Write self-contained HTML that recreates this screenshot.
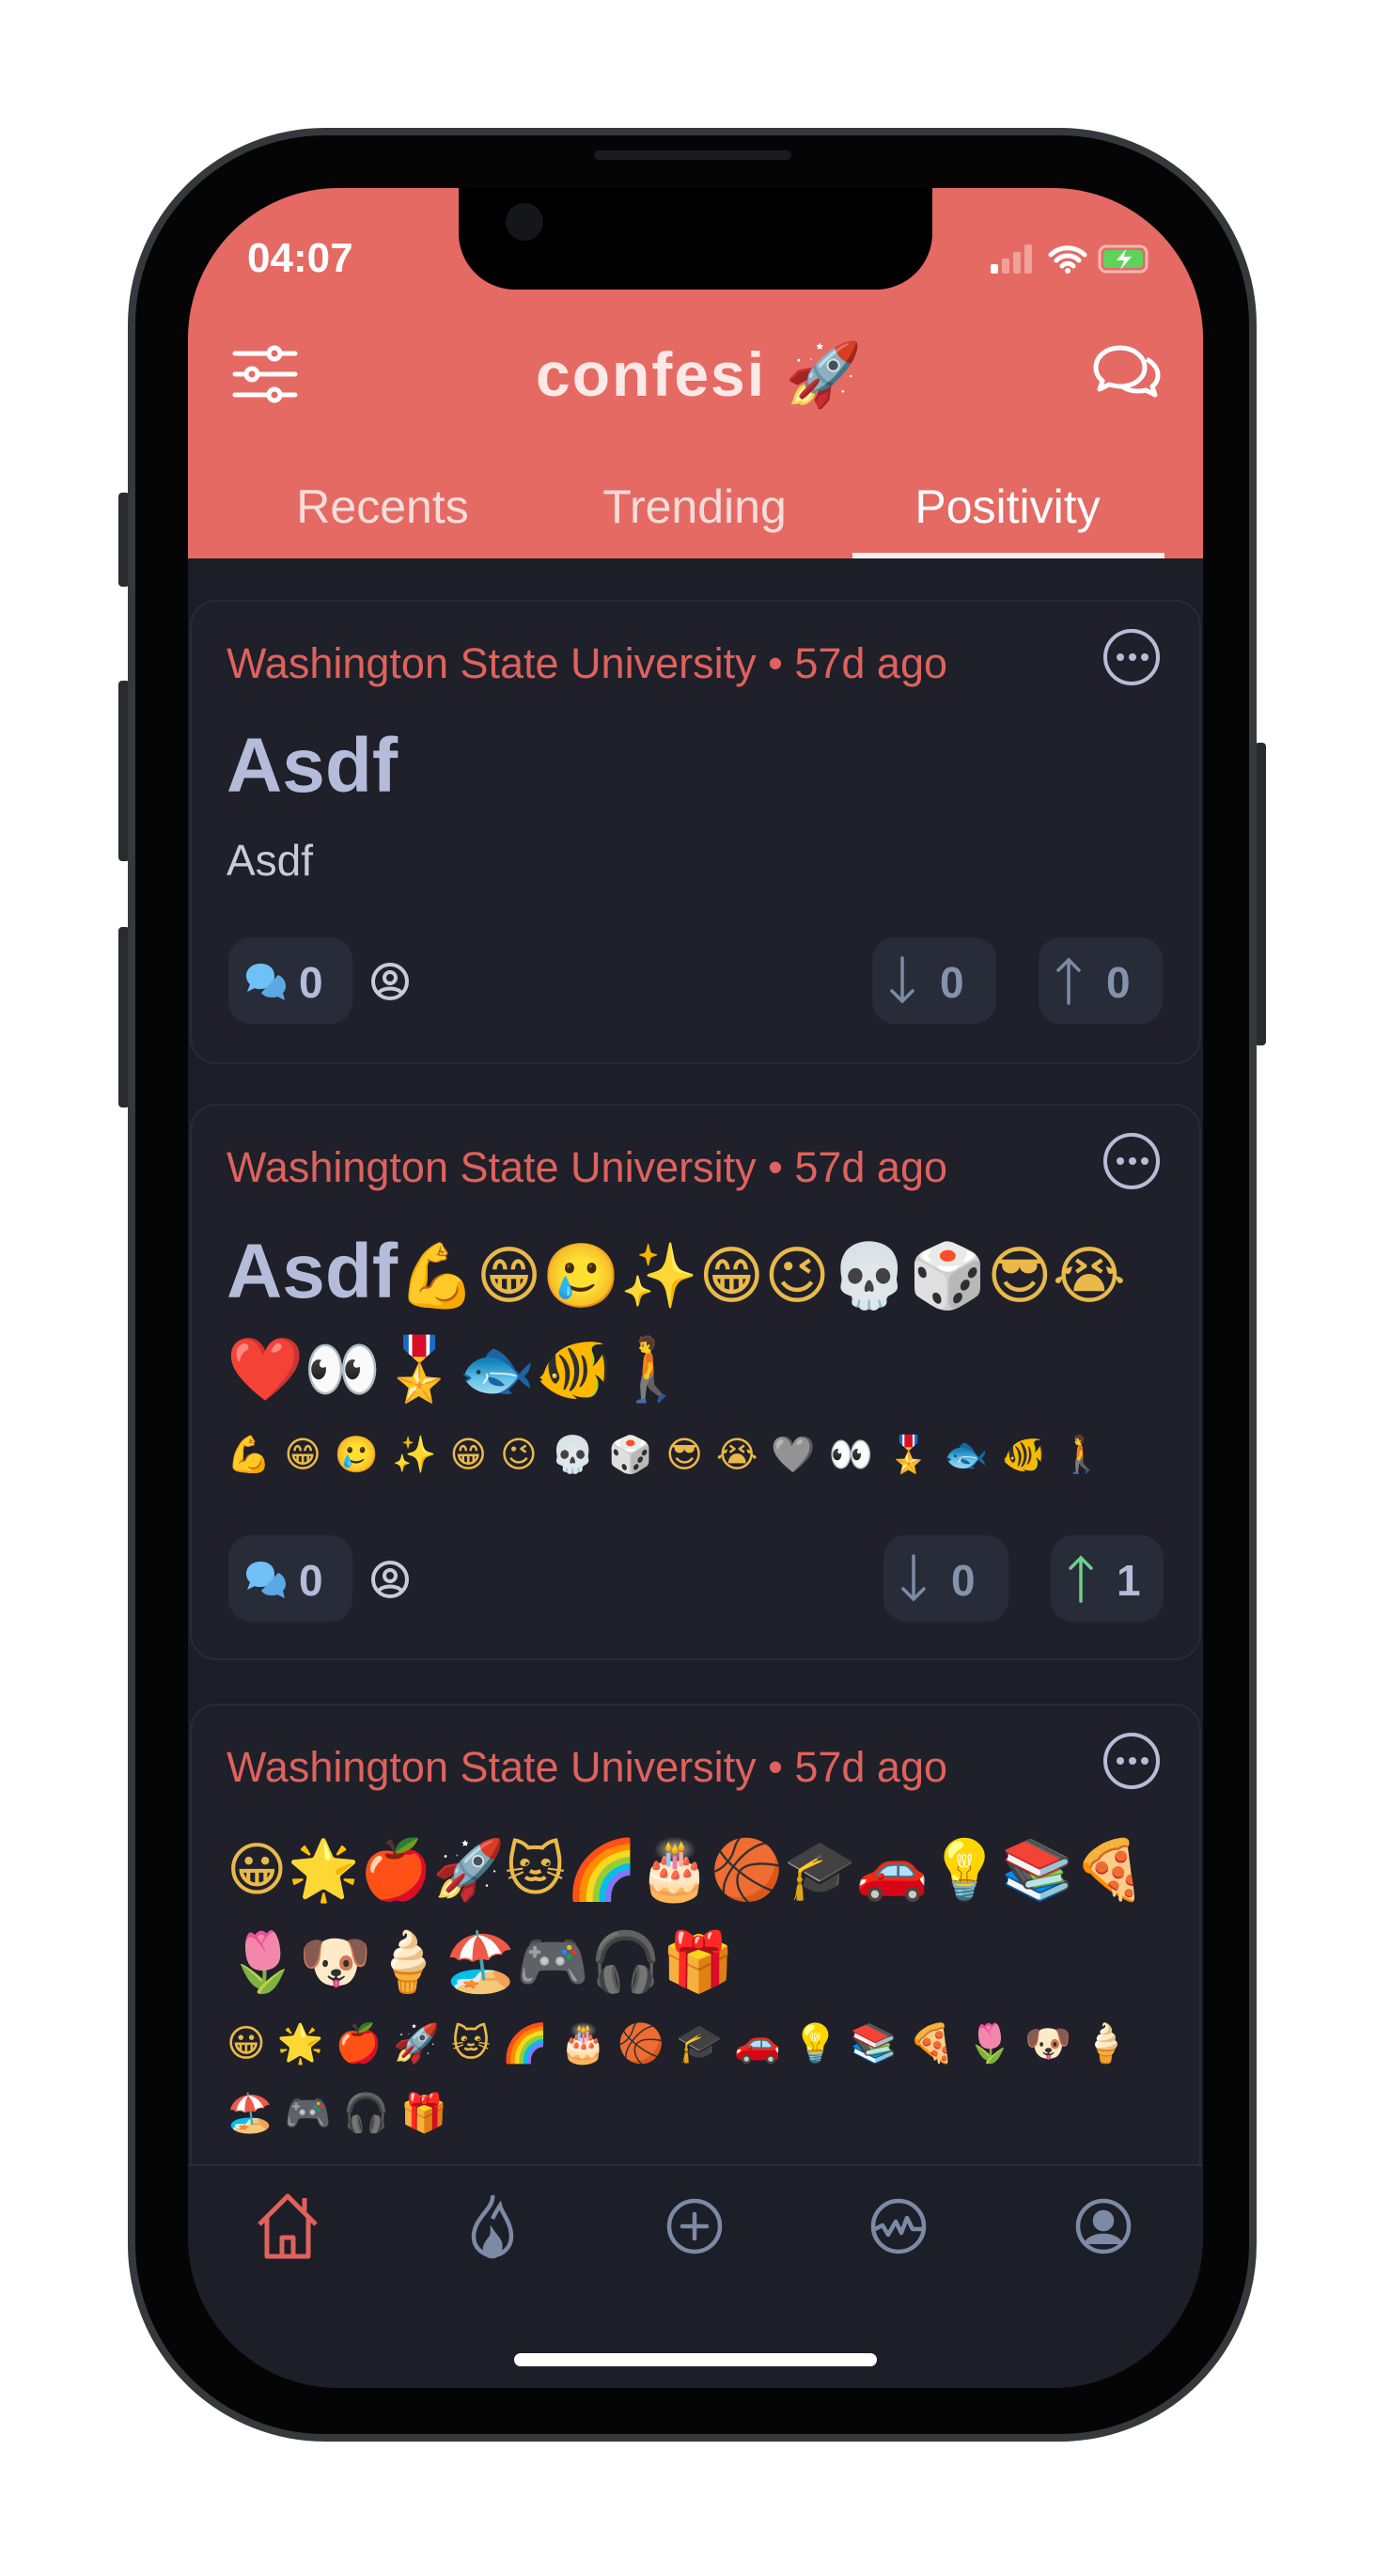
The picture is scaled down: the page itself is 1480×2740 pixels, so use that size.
<!DOCTYPE html>
<html><head><meta charset="utf-8"><style>
*{margin:0;padding:0;box-sizing:border-box}
body{width:1480px;height:2740px;background:#fff;position:relative;overflow:hidden;font-family:"Liberation Sans",sans-serif}
.a{position:absolute}
.phone{left:136px;top:136px;width:1201px;height:2461px;border-radius:210px;background:#050506;border:8px solid #36383c}
.btn{background:#2a2b2f;border-radius:4px}
.screen{left:200px;top:200px;width:1080px;height:2340px;border-radius:160px;background:#1c1e27;overflow:hidden}
.hdr{left:0;top:0;width:1080px;height:394px;background:#e56a63}
.notch{left:288px;top:0;width:504px;height:108px;background:#000;border-radius:0 0 60px 60px}
.card{left:2px;width:1076px;background:#1f2029;border:2px solid #292b35;border-radius:28px}
.meta{left:41px;font-size:45px;color:#e0625c;white-space:nowrap}
.dots{width:60px;height:60px;border:4px solid #b7bdd6;border-radius:50%}
.pill{height:92px;background:#282c38;border-radius:24px}
.num{font-weight:bold;font-size:46px;color:#b4bcd9}
.emo{font-family:"DejaVu Sans","Noto Sans CJK JP",sans-serif;color:#e9b949;white-space:nowrap}
</style></head><body>
<div class="a btn" style="left:126px;top:524px;width:12px;height:100px"></div>
<div class="a btn" style="left:126px;top:724px;width:12px;height:192px"></div>
<div class="a btn" style="left:126px;top:986px;width:12px;height:192px"></div>
<div class="a btn" style="left:1335px;top:790px;width:12px;height:322px"></div>
<div class="a phone"></div>
<div class="a" style="left:632px;top:160px;width:210px;height:10px;border-radius:5px;background:#1a1b1e"></div>
<div class="a screen">
 <div class="a hdr"></div>
 <div class="a notch"></div>
 <div class="a" style="left:338px;top:16px;width:40px;height:40px;border-radius:50%;background:#15161a"></div>
 <div class="a" style="left:63px;top:50px;font-size:44px;font-weight:bold;color:#fff">04:07</div>
 <svg class="a" style="left:850px;top:55px" width="180" height="40" viewBox="0 0 180 40">
  <rect x="4" y="26" width="8" height="10" rx="2" fill="#fff"/><rect x="16" y="20" width="8" height="16" rx="2" fill="#f0a19c"/><rect x="28" y="13" width="8" height="23" rx="2" fill="#f0a19c"/><rect x="40" y="5" width="8" height="31" rx="2" fill="#f0a19c"/>
  <path d="M68 16a26 26 0 0 1 36 0M74 22a17 17 0 0 1 24 0M80 28a8 8 0 0 1 12 0" stroke="#fff" stroke-width="5" fill="none" stroke-linecap="round"/><circle cx="86" cy="33" r="3" fill="#fff"/>
  <rect x="120" y="7" width="50" height="27" rx="7" fill="none" stroke="#f5b8b3" stroke-width="3"/><rect x="124" y="11" width="42" height="19" rx="4" fill="#5fd25b"/><path d="M148 10l-10 12h8l-4 10 12-14h-8z" fill="#fff"/>
 </svg>
 <svg class="a" style="left:46px;top:166px" width="72" height="66" viewBox="0 0 72 66" stroke="#fff" stroke-width="5" fill="none" stroke-linecap="round">
  <path d="M4 10h64M4 32h64M4 54h64"/><circle cx="46" cy="10" r="6" fill="#e56a63"/><circle cx="22" cy="32" r="6" fill="#e56a63"/><circle cx="46" cy="54" r="6" fill="#e56a63"/>
 </svg>
 <div class="a" style="left:370px;top:160px;font-size:66px;font-weight:bold;color:#fbe9e7;letter-spacing:2px">confesi <span class="emo" style="color:#c8d3e8">🚀</span></div>
 <svg class="a" style="left:962px;top:164px" width="74" height="70" viewBox="0 0 74 70" stroke="#fff" stroke-width="5" fill="none" stroke-linejoin="round">
  <path d="M30 6C15 6 4 15 4 27c0 6 3 11 7 14l-3 9 10-5c4 1 8 2 12 2 15 0 26-9 26-20S45 6 30 6z"/>
  <path d="M58 18c7 4 12 10 12 17 0 5-2 9-6 12l3 9-10-5c-3 1-6 1-9 1-6 0-12-2-16-5"/>
 </svg>
 <div class="a" style="left:0;top:310px;width:1080px;font-size:50px;color:#f6dcd9">
  <span class="a" style="left:207px;width:0;display:flex;justify-content:center;white-space:nowrap">Recents</span>
  <span class="a" style="left:539px;width:0;display:flex;justify-content:center;white-space:nowrap">Trending</span>
  <span class="a" style="left:872px;width:0;display:flex;justify-content:center;white-space:nowrap;color:#fff">Positivity</span>
 </div>
 <div class="a" style="left:707px;top:388px;width:332px;height:6px;background:#fbeeee"></div>

 <!-- card 1 -->
 <div class="a card" style="top:438px;height:494px"></div>
 <div class="a meta" style="top:480px">Washington State University • 57d ago</div>
 <div class="a dots" style="left:974px;top:469px"></div>
 <div class="a" style="left:988px;top:495px;font-size:0"><svg width="34" height="8"><circle cx="4" cy="4" r="4" fill="#b7bdd6"/><circle cx="17" cy="4" r="4" fill="#b7bdd6"/><circle cx="30" cy="4" r="4" fill="#b7bdd6"/></svg></div>
 <div class="a" style="left:41px;top:568px;font-size:82px;font-weight:900;color:#b4bcd9">Asdf</div>
 <div class="a" style="left:41px;top:688px;font-size:46px;color:#c8ccd8">Asdf</div>

 <div class="a pill" style="left:43px;top:797px;width:132px"></div>
 <svg class="a" style="left:60px;top:823px" width="46" height="42" viewBox="0 0 46 42"><path d="M17 2C8 2 2 8 2 15c0 4 2 7 4 9l-3 8 8-4c2 1 4 1 6 1 9 0 15-6 15-14S26 2 17 2z" fill="#6ec0f6"/><path d="M36 14c5 2 8 7 8 12 0 3-1 5-3 7l2 8-8-4c-2 1-4 1-6 1-5 0-9-2-11-5" fill="#5aa9e4"/></svg>
 <div class="a num" style="left:118px;top:818px">0</div>
 <svg class="a" style="left:194px;top:823px" width="42" height="42" viewBox="0 0 42 42" fill="none" stroke="#c8ccd8" stroke-width="4"><circle cx="21" cy="21" r="18"/><circle cx="21" cy="17" r="6"/><path d="M9 33c4-6 20-6 24 0"/></svg>
 <div class="a pill" style="left:728px;top:797px;width:132px"></div>
 <svg class="a" style="left:745px;top:816px" width="30" height="54" viewBox="0 0 30 54" fill="none" stroke="#7d8aa6" stroke-width="3.5" stroke-linecap="round"><path d="M15 3v46M4 38l11 11 11-11"/></svg>
 <div class="a num" style="left:800px;top:818px;color:#8592ad">0</div>
 <div class="a pill" style="left:905px;top:797px;width:132px"></div>
 <svg class="a" style="left:922px;top:816px" width="30" height="54" viewBox="0 0 30 54" fill="none" stroke="#7d8aa6" stroke-width="3.5" stroke-linecap="round"><path d="M15 51V5M4 16L15 5l11 11"/></svg>
 <div class="a num" style="left:977px;top:818px;color:#8592ad">0</div>

 <!-- card 2 -->
 <div class="a card" style="top:974px;height:592px"></div>
 <div class="a meta" style="top:1016px">Washington State University • 57d ago</div>
 <div class="a dots" style="left:974px;top:1005px"></div>
 <div class="a" style="left:988px;top:1031px;font-size:0"><svg width="34" height="8"><circle cx="4" cy="4" r="4" fill="#b7bdd6"/><circle cx="17" cy="4" r="4" fill="#b7bdd6"/><circle cx="30" cy="4" r="4" fill="#b7bdd6"/></svg></div>
 <div class="a" style="left:41px;top:1106px;font-size:82px;font-weight:900;color:#b4bcd9;white-space:nowrap">Asdf<span class="emo" style="font-size:67px">💪😁🥲✨😁😉💀🎲😎😭</span></div>
 <div class="a emo" style="left:41px;top:1218px;font-size:66px">❤️👀🎖️🐟🐠🚶</div>
 <div class="a emo" style="left:41px;top:1325px;font-size:38px;letter-spacing:14px">💪😁🥲✨😁😉💀🎲😎😭🩶👀🎖️🐟🐠🚶</div>
 <div class="a pill" style="left:43px;top:1433px;width:132px"></div>
 <svg class="a" style="left:60px;top:1459px" width="46" height="42" viewBox="0 0 46 42"><path d="M17 2C8 2 2 8 2 15c0 4 2 7 4 9l-3 8 8-4c2 1 4 1 6 1 9 0 15-6 15-14S26 2 17 2z" fill="#6ec0f6"/><path d="M36 14c5 2 8 7 8 12 0 3-1 5-3 7l2 8-8-4c-2 1-4 1-6 1-5 0-9-2-11-5" fill="#5aa9e4"/></svg>
 <div class="a num" style="left:118px;top:1454px">0</div>
 <svg class="a" style="left:194px;top:1459px" width="42" height="42" viewBox="0 0 42 42" fill="none" stroke="#c8ccd8" stroke-width="4"><circle cx="21" cy="21" r="18"/><circle cx="21" cy="17" r="6"/><path d="M9 33c4-6 20-6 24 0"/></svg>
 <div class="a pill" style="left:740px;top:1433px;width:133px"></div>
 <svg class="a" style="left:757px;top:1452px" width="30" height="54" viewBox="0 0 30 54" fill="none" stroke="#7d8aa6" stroke-width="3.5" stroke-linecap="round"><path d="M15 3v46M4 38l11 11 11-11"/></svg>
 <div class="a num" style="left:812px;top:1454px;color:#8592ad">0</div>
 <div class="a pill" style="left:918px;top:1433px;width:120px"></div>
 <svg class="a" style="left:935px;top:1452px" width="30" height="54" viewBox="0 0 30 54" fill="none" stroke="#6fcf8f" stroke-width="3.5" stroke-linecap="round"><path d="M15 51V5M4 16L15 5l11 11"/></svg>
 <div class="a num" style="left:988px;top:1454px">1</div>

 <!-- card 3 -->
 <div class="a card" style="top:1612px;height:800px"></div>
 <div class="a meta" style="top:1654px">Washington State University • 57d ago</div>
 <div class="a dots" style="left:974px;top:1643px"></div>
 <div class="a" style="left:988px;top:1669px;font-size:0"><svg width="34" height="8"><circle cx="4" cy="4" r="4" fill="#b7bdd6"/><circle cx="17" cy="4" r="4" fill="#b7bdd6"/><circle cx="30" cy="4" r="4" fill="#b7bdd6"/></svg></div>
 <div class="a emo" style="left:41px;top:1752px;font-size:62px;letter-spacing:0px">😀🌟🍎🚀🐱🌈🎂🏀🎓🚗💡📚🍕</div>
 <div class="a emo" style="left:41px;top:1850px;font-size:62px;letter-spacing:0px">🌷🐶🍦🏖️🎮🎧🎁</div>
 <div class="a emo" style="left:41px;top:1950px;font-size:40px;letter-spacing:12px">😀🌟🍎🚀🐱🌈🎂🏀🎓🚗💡📚🍕🌷🐶🍦</div>
 <div class="a emo" style="left:41px;top:2024px;font-size:40px;letter-spacing:12px">🏖️🎮🎧🎁</div>

 <!-- tab bar -->
 <div class="a" style="left:0;top:2102px;width:1080px;height:238px;background:#1d1f28;border-top:2px solid #2a2d38"></div>
 <svg class="a" style="left:72px;top:2132px" width="68" height="72" viewBox="0 0 68 72" fill="none" stroke="#e0625c" stroke-width="5" stroke-linejoin="round"><path d="M4 34L34 4l30 30M12 26v42h44V26M28 68V48h12v20M52 20V6"/></svg>
 <svg class="a" style="left:300px;top:2132px" width="48" height="72" viewBox="0 0 48 72" fill="none" stroke="#7d8aa6" stroke-width="4.5"><path d="M24 3c2 14-20 24-20 44a20 20 0 0 0 40 0C44 32 34 22 32 14c-4 6-6 10-8 14"/><path d="M24 68c-8 0-10-8-6-14 2-4 6-6 6-12 4 6 10 10 8 18-1 5-4 8-8 8z" fill="#7d8aa6"/></svg>
 <svg class="a" style="left:508px;top:2137px" width="62" height="62" viewBox="0 0 62 62" fill="none" stroke="#7d8aa6" stroke-width="4.5" stroke-linecap="round"><circle cx="31" cy="31" r="27"/><path d="M31 18v26M18 31h26"/></svg>
 <svg class="a" style="left:725px;top:2137px" width="62" height="62" viewBox="0 0 62 62" fill="none" stroke="#7d8aa6" stroke-width="4.5" stroke-linejoin="round"><circle cx="31" cy="31" r="27"/><path d="M6 34l8-4 6 10 8-14 6 12 6-16 6 12h10"/></svg>
 <svg class="a" style="left:943px;top:2137px" width="62" height="62" viewBox="0 0 62 62" fill="none" stroke="#7d8aa6" stroke-width="4.5"><circle cx="31" cy="31" r="27"/><circle cx="31" cy="25" r="9" fill="#7d8aa6"/><path d="M12 50c6-12 32-12 38 0" fill="#7d8aa6"/></svg>
 <div class="a" style="left:347px;top:2303px;width:386px;height:14px;border-radius:7px;background:#fff"></div>
</div>
</body></html>
